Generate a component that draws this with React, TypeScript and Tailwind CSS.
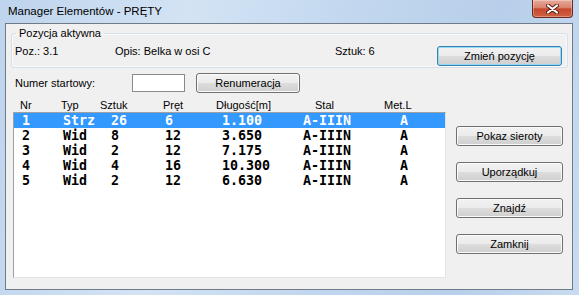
import React from "react";

const rows = [
  ["1", "Strz", "26", "6", "1.100", "A-IIIN", "A"],
  ["2", "Wid", "8", "12", "3.650", "A-IIIN", "A"],
  ["3", "Wid", "2", "12", "7.175", "A-IIIN", "A"],
  ["4", "Wid", "4", "16", "10.300", "A-IIIN", "A"],
  ["5", "Wid", "2", "12", "6.630", "A-IIIN", "A"],
];

function Btn({ label, className = "", focused = false }: { label: string; className?: string; focused?: boolean }) {
  return (
    <div
      className={
        "flex items-center justify-center rounded-[3px] border text-[11px] leading-[13px] text-black " +
        "bg-[linear-gradient(to_bottom,#f2f2f2_0%,#ebebeb_50%,#dddddd_50%,#cfcfcf_100%)] " +
        (focused
          ? "border-[#3c7fb1] shadow-[inset_0_0_0_1px_#8fdcf7] "
          : "border-[#707070] shadow-[inset_0_0_0_1px_#fbfbfb] ") +
        className
      }
    >
      {label}
    </div>
  );
}

export default function App() {
  return (
    <div className="w-[579px] h-[295px] overflow-hidden font-['Liberation_Sans',Arial,sans-serif] bg-[linear-gradient(100deg,#bed4ed_0%,#d3e3f4_30%,#c3d8ef_55%,#b7cfea_80%,#c8dbf0_100%)]">
      {/* title bar */}
      <div className="flex h-[23px] items-start">
        <div className="ml-[8px] mt-[4px] text-[11.5px] leading-[14px] text-black">Manager Elementów - PRĘTY</div>
        <div className="ml-auto mr-[6px] flex h-[18px] w-[41px] items-center justify-center rounded-b-[4px] border border-t-0 border-[#6e2a20] bg-[linear-gradient(to_bottom,#e8ab9c_0%,#d9826e_45%,#c6482e_52%,#cf6040_100%)] shadow-[inset_0_0_0_1px_rgba(255,255,255,0.3)]">
          <svg width="13" height="10" viewBox="0 0 13 10">
            <path d="M2 1.5 L11 8.5 M11 1.5 L2 8.5" stroke="#5a1d14" strokeWidth="4" strokeLinecap="round" />
            <path d="M2 1.5 L11 8.5 M11 1.5 L2 8.5" stroke="#ffffff" strokeWidth="2.2" strokeLinecap="round" />
          </svg>
        </div>
      </div>

      {/* client area */}
      <div className="ml-[5px] h-[267px] w-[568px] border border-[#6f7b89] bg-[#f0f0f0] text-[11px] leading-[13px] text-black">
        {/* group box */}
        <fieldset className="ml-[5px] mt-[3px] h-[41px] w-[557px] rounded-[3px] border border-[#d5dfe5] p-0 pl-[4px] shadow-[inset_0_0_0_1px_#fafafa]">
          <legend className="px-[3px] leading-[13px]">Pozycja aktywna</legend>
          <div className="-ml-[4px] flex h-[27px] items-start pl-[3px]">
            <div className="mt-[5px] w-[100px]">Poz.: 3.1</div>
            <div className="mt-[5px] w-[220px]">Opis: Belka w osi C</div>
            <div className="mt-[5px] w-[102px]">Sztuk: 6</div>
            <Btn label="Zmień pozycję" focused className="mt-[6px] h-[20px] w-[125px]" />
          </div>
        </fieldset>

        {/* renumeracja row */}
        <div className="mt-[5px] flex h-[20px] items-center pl-[9px]">
          <div className="w-[117px]">Numer startowy:</div>
          <div className="h-[18px] w-[53px] border border-[#8a8a8a] bg-white" />
          <Btn label="Renumeracja" className="ml-[11px] h-[20px] w-[104px]" />
        </div>

        {/* list + buttons */}
        <div className="ml-[7px] flex">
          <div className="w-[433px]">
            <div className="mt-[6px] flex h-[13px] pl-[7px]">
              <div className="w-[41px]">Nr</div>
              <div className="w-[39px]">Typ</div>
              <div className="w-[63px]">Sztuk</div>
              <div className="w-[53px]">Pręt</div>
              <div className="w-[99px]">Długość[m]</div>
              <div className="w-[69px]">Stal</div>
              <div>Met.L</div>
            </div>
            <div className="h-[166px] border border-t-[#a0a0a0] border-l-[#a0a0a0] border-r-[#e3e3e3] border-b-[#e3e3e3] bg-white font-['DejaVu_Sans_Mono',monospace] text-[13.33px] font-bold">
              {rows.map((r, i) => (
                <div
                  key={i}
                  className={
                    "flex h-[15px] items-center pl-[8px] leading-[15px] " +
                    (i === 0 ? "bg-[#3399ff] text-white" : "text-black")
                  }
                >
                  <div className="w-[41px]">{r[0]}</div>
                  <div className="w-[48px]">{r[1]}</div>
                  <div className="w-[54px]">{r[2]}</div>
                  <div className="w-[57px]">{r[3]}</div>
                  <div className="w-[81px]">{r[4]}</div>
                  <div className="w-[97px]">{r[5]}</div>
                  <div>{r[6]}</div>
                </div>
              ))}
            </div>
          </div>
          <div className="ml-[10px] mt-[33px] flex w-[107px] flex-col gap-[16px]">
            <Btn label="Pokaz sieroty" className="h-[20px]" />
            <Btn label="Uporządkuj" className="h-[20px]" />
            <Btn label="Znajdź" className="h-[20px]" />
            <Btn label="Zamknij" className="h-[20px]" />
          </div>
        </div>
      </div>
    </div>
  );
}
